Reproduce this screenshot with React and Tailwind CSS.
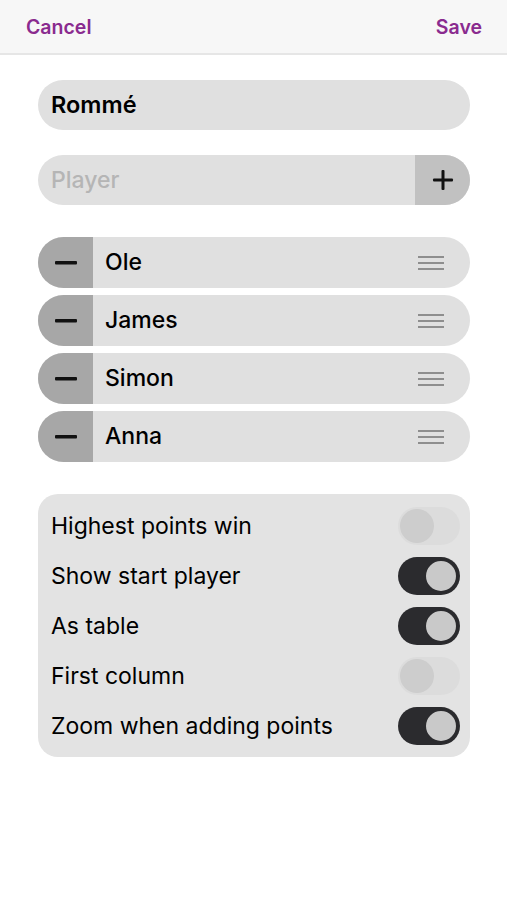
import { useState } from "react";

const font = { fontFamily: "Inter, 'Liberation Sans', sans-serif" };

function Toggle({ on, onClick }) {
  if (!on) {
    return (
      <button
        onClick={onClick}
        className="w-[62px] h-[38px] rounded-full bg-[#dcdcdc] p-[2px] flex items-center"
      >
        <span className="w-[34px] h-[34px] rounded-full bg-[#cdcdcd]" />
      </button>
    );
  }
  return (
    <button
      onClick={onClick}
      className="w-[62px] h-[38px] rounded-full bg-[#2b2b2e] p-[2px] flex items-center justify-end"
    >
      <span className="w-[34px] h-[34px] rounded-full bg-[#c9c9c9] border-2 border-[#2b2b2e]" />
    </button>
  );
}

function DragHandle() {
  return (
    <svg width="26" height="14" viewBox="0 0 26 14">
      <rect x="0" y="0" width="26" height="2" fill="#8e8e8e" />
      <rect x="0" y="6" width="26" height="2" fill="#8e8e8e" />
      <rect x="0" y="12" width="26" height="2" fill="#8e8e8e" />
    </svg>
  );
}

export default function App() {
  const [players, setPlayers] = useState(["Ole", "James", "Simon", "Anna"]);
  const [settings, setSettings] = useState([
    { label: "Highest points win", on: false },
    { label: "Show start player", on: true },
    { label: "As table", on: true },
    { label: "First column", on: false },
    { label: "Zoom when adding points", on: true },
  ]);

  const toggle = (i) =>
    setSettings((s) => s.map((x, j) => (j === i ? { ...x, on: !x.on } : x)));

  return (
    <div className="w-[507px] h-[900px] bg-white" style={font}>
      {/* Header */}
      <div className="h-[55px] bg-[#f7f7f7] border-b-2 border-[#e6e6e6] flex items-center justify-between pl-[26px] pr-[25px] pt-[2px]">
        <button className="text-[19.5px] font-semibold text-[#8a2b8f]">Cancel</button>
        <button className="text-[19.5px] font-semibold text-[#8a2b8f]">Save</button>
      </div>

      <div className="pl-[38px] pr-[37px] pt-[25px] flex flex-col">
        {/* Game name */}
        <div className="h-[50px] rounded-full bg-[#e0e0e0] flex items-center px-[13px]">
          <span className="text-[23.5px] font-semibold text-black">Rommé</span>
        </div>

        {/* New player */}
        <div className="mt-[25px] h-[50px] rounded-full bg-[#e0e0e0] flex items-center overflow-hidden">
          <span className="flex-1 px-[13px] text-[23px] font-medium text-[#b5b5b5]">Player</span>
          <button className="w-[55px] h-full bg-[#c1c1c1] flex items-center justify-center">
            <svg width="22" height="22" viewBox="0 0 22 22">
              <rect x="9.5" y="1" width="3" height="20" rx="1" fill="#111" />
              <rect x="1" y="9.5" width="20" height="3" rx="1" fill="#111" />
            </svg>
          </button>
        </div>

        {/* Players */}
        <div className="mt-[32px] flex flex-col gap-[7px]">
          {players.map((p, i) => (
            <div key={p} className="h-[51px] rounded-full bg-[#e0e0e0] flex items-center overflow-hidden">
              <button
                onClick={() => setPlayers(players.filter((_, j) => j !== i))}
                className="w-[55px] h-full bg-[#a7a7a7] flex items-center justify-center"
              >
                <svg width="22" height="4" viewBox="0 0 22 4">
                  <rect x="0" y="0" width="22" height="3.5" rx="1" fill="#111" />
                </svg>
              </button>
              <span className="flex-1 pl-[12px] text-[23px] font-medium text-black">{p}</span>
              <div className="pr-[26px] flex items-center">
                <DragHandle />
              </div>
            </div>
          ))}
        </div>

        {/* Settings */}
        <div className="mt-[32px] rounded-[20px] bg-[#e3e3e3] pt-[7px] pb-[6px]">
          {settings.map((s, i) => (
            <div key={s.label} className="h-[50px] flex items-center justify-between pl-[13px] pr-[10px]">
              <span className="text-[23px] text-black">{s.label}</span>
              <Toggle on={s.on} onClick={() => toggle(i)} />
            </div>
          ))}
        </div>
      </div>
    </div>
  );
}
